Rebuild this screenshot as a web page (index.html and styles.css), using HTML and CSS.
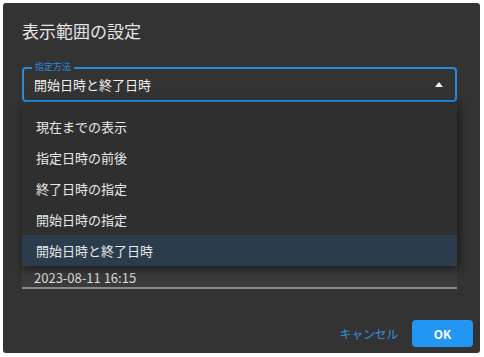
FILE: index.html
```html
<!DOCTYPE html>
<html lang="ja">
<head>
    <meta charset="UTF-8">
    <title>表示範囲の設定</title>
    <link rel="stylesheet" href="styles.css">
</head>
<body>
    <div class="dialog">
        <div class="dialog-title">表示範囲の設定</div>
        <div class="dialog-body">
            <div class="select-field">
                <span class="field-label">指定方法</span>
                <span class="field-value">開始日時と終了日時</span>
                <span class="arrow"></span>
                <ul class="menu">
                    <li>現在までの表示</li>
                    <li>指定日時の前後</li>
                    <li>終了日時の指定</li>
                    <li>開始日時の指定</li>
                    <li class="selected">開始日時と終了日時</li>
                </ul>
            </div>
            <div class="date-field">
                <span class="date-value">2023-08-11 16:15</span>
            </div>
        </div>
        <div class="dialog-actions">
            <span class="btn-cancel">キャンセル</span>
            <span class="btn-ok">OK</span>
        </div>
    </div>
</body>
</html>
```

FILE: styles.css
```css
html, body {
    margin: 0;
    padding: 0;
    background: #ffffff;
}
body {
    padding: 3px 4px 4px 3px;
    font-family: "Noto Sans CJK JP", "Noto Sans", sans-serif;
}
.dialog {
    width: 477px;
    height: 350px;
    background: #333333;
    border-radius: 3px;
    display: flex;
    flex-direction: column;
    box-sizing: border-box;
}
.dialog-title {
    color: #e6e6e6;
    font-size: 17px;
    line-height: 24px;
    padding: 16px 0 0 19px;
}
.dialog-body {
    flex: 1;
    padding: 24px 23px 0 19px;
}
.select-field {
    position: relative;
    height: 35px;
    border: 2px solid #2a8ae2;
    border-radius: 4px;
    box-sizing: border-box;
    display: flex;
    align-items: center;
    padding: 0 12px 0 10px;
}
.field-label {
    position: absolute;
    top: -8px;
    left: 8px;
    padding: 0 3px;
    background: #333333;
    color: #2a8ae2;
    font-size: 9px;
    line-height: 12px;
}
.field-value {
    flex: 1;
    color: #f0f0f0;
    font-size: 13px;
    line-height: 18px;
}
.arrow {
    width: 0;
    height: 0;
    border-left: 4px solid transparent;
    border-right: 4px solid transparent;
    border-bottom: 5px solid #f0f0f0;
}
.menu {
    position: absolute;
    top: 34px;
    left: -2px;
    right: -2px;
    margin: 0;
    padding: 8px 0 0;
    list-style: none;
    background: #2f2f2f;
    box-shadow: 0 5px 8px rgba(0, 0, 0, 0.35), 4px 0 8px rgba(0, 0, 0, 0.25);
    z-index: 2;
}
.menu li {
    height: 31px;
    line-height: 31px;
    padding-left: 14px;
    color: #e8e8e8;
    font-size: 13px;
}
.menu li.selected {
    background: #2b3d4d;
}
.date-field {
    margin-top: 149px;
    height: 38px;
    background: #3b3b3b;
    border-bottom: 2px solid #8a8a8a;
    box-sizing: border-box;
    display: flex;
    align-items: flex-end;
    padding: 0 0 1px 12px;
}
.date-value {
    color: #dcdcdc;
    font-size: 13px;
    line-height: 16px;
}
.dialog-actions {
    display: flex;
    justify-content: flex-end;
    align-items: center;
    gap: 14px;
    padding: 0 7px 6px 0;
}
.btn-cancel {
    color: #3390e0;
    font-size: 12px;
    letter-spacing: -0.3px;
}
.btn-ok {
    width: 61px;
    height: 27px;
    line-height: 27px;
    text-align: center;
    background: #2196f3;
    color: #ffffff;
    font-weight: bold;
    font-size: 12px;
    border-radius: 4px;
}
```
